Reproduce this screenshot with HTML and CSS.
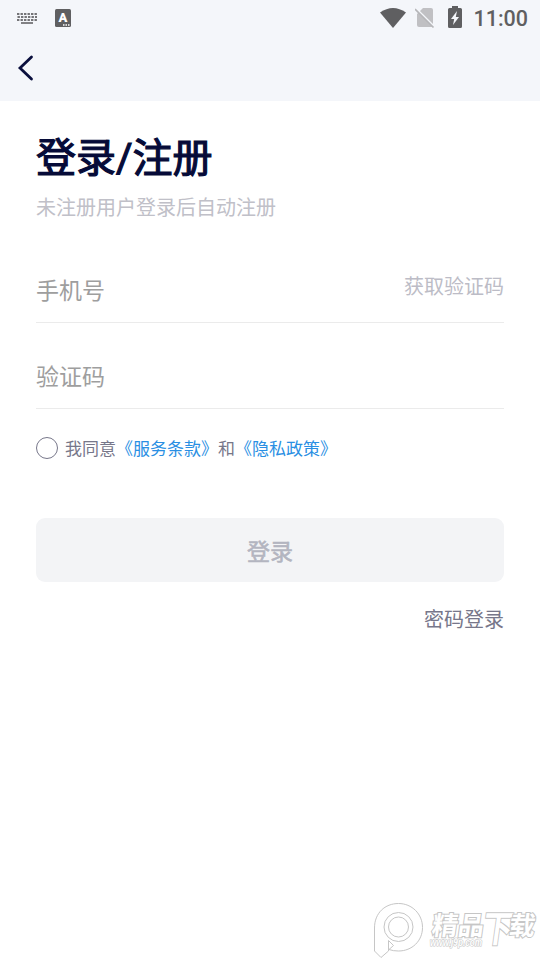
FILE: index.html
```html
<!DOCTYPE html>
<html lang="zh-CN">
<head>
<meta charset="utf-8">
<title>登录/注册</title>
<link rel="stylesheet" href="styles.css">
</head>
<body>
<header class="top">
  <div class="status">
    <svg class="keyboard" width="22" height="14" viewBox="0 0 22 14" fill="none" stroke="#747477" stroke-width="1.8">
      <path d="M1 2H21.500" stroke-dasharray="2.4 1.1"/><path d="M1.500 5H21" stroke-dasharray="2.4 1.1"/><path d="M1 8H21.500" stroke-dasharray="2.4 1.1"/><path d="M5 11H17"/>
    </svg>
    <span class="input-badge">A<svg width="7" height="2" viewBox="0 0 7 2"><path d="M0 1H7" stroke="#fff" stroke-width="1.4" stroke-dasharray="1.5 1"/></svg></span>
    <div class="status-right">
      <svg width="28" height="22" viewBox="0 0 28 22"><path d="M1 5.5Q14-3.5 27 5.5L14 21Z" fill="#5f5f61"/></svg>
      <svg class="sim" width="20" height="22" viewBox="0 0 20 22"><path d="M8 1H16Q18 1 18 3V18Q18 20 16 20H4Q2 20 2 18V7Z" fill="#c0c0c3"/><path d="M1 1.5L20 20.5" stroke="#f4f6fa" stroke-width="2"/><path d="M0 2L18.5 20.5" stroke="#b6b6b9" stroke-width="1.700"/></svg>
      <svg class="battery" width="14" height="22" viewBox="0 0 14 22"><path d="M4 0H10V2H12.500Q14 2 14 3.500V20.500Q14 22 12.500 22H1.500Q0 22 0 20.500V3.500Q0 2 1.500 2H4Z" fill="#5f5f61"/><path d="M9 5L3 13H6.200L5 19L11 11H7.800Z" fill="#f4f6fa"/></svg>
      <span class="time">11:00</span>
    </div>
  </div>
  <svg class="back" width="18" height="28" viewBox="0 0 18 28"><path d="M14.500 3L3 14L14.500 25" fill="none" stroke="#0a0f3d" stroke-width="2.800" stroke-linecap="round" stroke-linejoin="miter"/></svg>
</header>
<main class="content">
  <h1 class="title">登录<span class="slash">/</span>注册</h1>
  <p class="subtitle">未注册用户登录后自动注册</p>
  <div class="field phone"><span>手机号</span><span class="get-code">获取验证码</span></div>
  <div class="field code"><span>验证码</span></div>
  <div class="agreement"><i class="radio"></i><span>我同意<a>《服务条款》</a>和<a>《隐私政策》</a></span></div>
  <div class="submit">登录</div>
  <div class="password-login">密码登录</div>
</main>
<svg class="watermark" width="175" height="65" viewBox="0 0 175 65" fill="#fff" stroke="#c6c6c6">
  <path d="M9.500 33C9.500 18 20 8.500 33.500 8.500C47 8.500 57.500 19 57.500 32.500C57.500 46 47 56 33.500 56Q28 56 24 54.500L28.500 50.500L23.500 45.500V56L16 62.500L9.500 56Z"/>
  <circle cx="33.500" cy="32" r="14.500"/><circle cx="33.500" cy="32" r="10"/>
  <g transform="translate(66 40) skewX(-8)">
    <text class="brand" x="0" y="0">精品</text>
    <text class="brand large" x="51" y="7" textLength="30" lengthAdjust="spacingAndGlyphs">下</text>
    <text class="brand" x="77" y="0">载</text>
  </g>
  <text class="site" x="65" y="51" textLength="52" lengthAdjust="spacingAndGlyphs">www.j9p.com</text>
</svg>
</body>
</html>
```
FILE: styles.css
```css
* { box-sizing: border-box; }
body {
  margin: 0;
  width: 540px;
  height: 960px;
  overflow: hidden;
  background: #fff;
  font-family: "Noto Sans CJK SC", sans-serif;
}
svg { display: block; }
.top { height: 101px; background: #f4f6fa; }
.status { display: flex; height: 36px; padding: 0 12px 0 16px; align-items: center; }
.keyboard { margin-top: 1px; }
.input-badge {
  position: relative;
  width: 16px;
  height: 18px;
  margin-left: 17px;
  border-radius: 1.5px;
  background: #5f5f61;
  color: #fff;
  font: 900 13px/17px Roboto, sans-serif;
  text-align: center;
}
.input-badge svg { position: absolute; right: 1px; bottom: 1px; }
.status-right { display: flex; align-items: center; margin-left: auto; }
.status-right svg { margin-top: -1px; }
.status-right .sim { margin-left: 8px; margin-top: 0; }
.status-right .battery { margin-left: 13px; margin-top: -2px; }
.time {
  margin: 2px 0 0 11px;
  color: #5f5f61;
  font: 500 21.5px/24px Roboto, sans-serif;
}
.back { margin: 18px 0 0 17px; }
.content { padding: 24px 36px 0; }
.title {
  margin: 0;
  height: 62px;
  color: #060b38;
  font-size: 40px;
  font-weight: 400;
  line-height: 61px;
  -webkit-text-stroke: 1.2px #060b38;
}
.slash { font-family: Roboto, sans-serif; line-height: 1; }
.subtitle { margin: 5px 0 0; color: #c0c0c8; font-size: 20px; line-height: 30px; }
.field {
  display: flex;
  justify-content: space-between;
  align-items: center;
  color: #9e9e9e;
  font-size: 23px;
  line-height: 34px;
  border-bottom: 1px solid #ebebeb;
}
.phone { height: 67px; margin-top: 34px; }
.code { height: 86px; padding-top: 18px; }
.get-code { margin-top: -6px; color: #bcbcc6; font-size: 20px; }
.agreement {
  display: flex;
  align-items: center;
  height: 26px;
  margin-top: 26px;
  color: #77778a;
  font-size: 17px;
  line-height: 26px;
}
.radio { width: 22px; height: 22px; margin-right: 7px; border: 1px solid #77778a; border-radius: 50%; }
.agreement a { color: #2a8fe3; }
.submit {
  height: 64px;
  margin-top: 57px;
  border-radius: 9px;
  background: #f3f4f6;
  color: #b3b5c0;
  font-size: 23px;
  line-height: 64px;
  text-align: center;
  -webkit-text-stroke: .6px #b3b5c0;
}
.password-login { margin-top: 22px; color: #77778a; font-size: 20px; line-height: 30px; text-align: right; }
.watermark { position: absolute; left: 365px; top: 895px; }
.brand { font-size: 26px; font-weight: 700; stroke-width: 2px; paint-order: stroke; }
.large { font-size: 37px; }
.site { font: italic 700 10px "Liberation Sans", sans-serif; stroke-width: 1.2px; paint-order: stroke; }
```
